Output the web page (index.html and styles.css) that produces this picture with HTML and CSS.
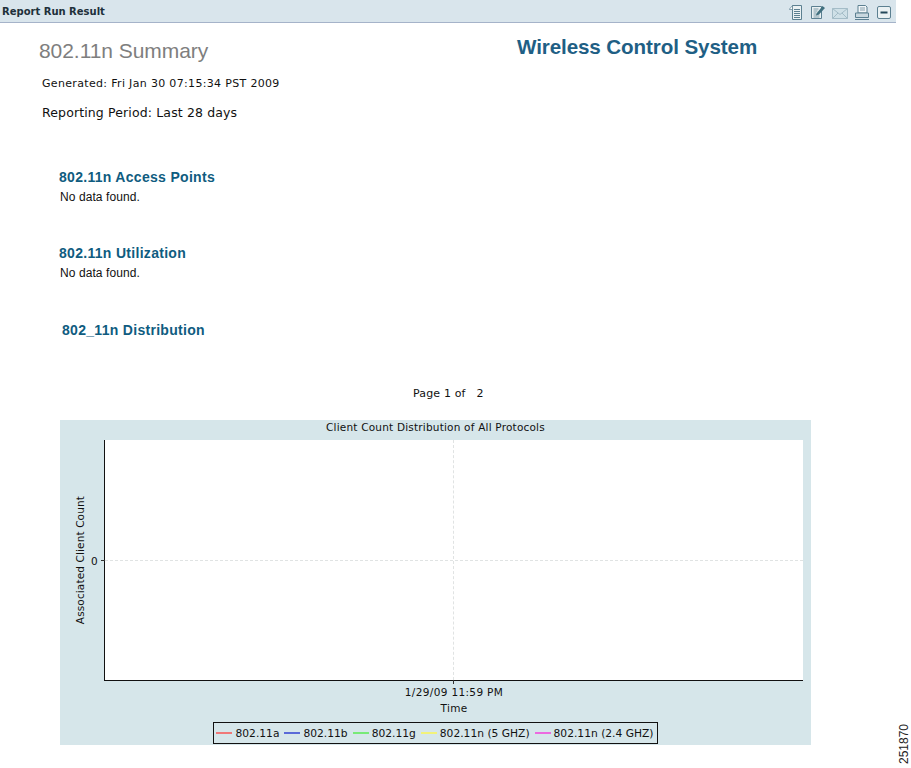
FILE: index.html
```html
<!DOCTYPE html>
<html lang="en">
<head>
<meta charset="utf-8">
<title>Report Run Result</title>
<link rel="stylesheet" href="styles.css">
</head>
<body>
<header class="topbar">
  <span class="topbar-title">Report Run Result</span>
  <div class="tools">
    <svg class="tool" viewBox="0 0 16 16"><path d="M4.500 1.500h9v14h-9z" fill="#eaf1f3" stroke="#5c8091"/><path d="M1.500 5 4.500 1.500V5.500H1.500z" fill="#fff" stroke="#5c8091" stroke-width=".7"/><path d="M6 5.500h6M6 7.500h6M6 9.500h6M6 11.500h6M6 13.500h6" stroke="#5c8091"/></svg>
    <svg class="tool" viewBox="0 0 16 16"><path d="M1.500 2.500h10v12h-10z" fill="#eaf1f3" stroke="#5c8091"/><path d="M3.500 5h5M3.500 7h4M3.500 9h3M3.500 11h6M3.500 13h6" stroke="#7d9aa7"/><path d="m6.500 9.500 6-7.500 2.500 2-6 6.500-3 1z" fill="#41707f"/></svg>
    <svg class="tool" viewBox="0 0 16 16"><path d="M.5 4.500h15v10H.5z" fill="#cfe0e7" stroke="#a4bcc7"/><path d="m.5 4.500 7.500 6 7.500-6M.5 14.500l5.500-5.500M15.500 14.500 10 9" fill="none" stroke="#a4bcc7"/></svg>
    <svg class="tool" viewBox="0 0 16 16"><path d="M4 1.500h7.500l1.500 1.500v6H4z" fill="#f2f6f8" stroke="#5c8091"/><path d="M1.500 9h13v4.500h-13z" fill="#c9d8df" stroke="#5c8091"/><path d="M1 15.500h14" stroke="#5c8091"/><path d="M6 4h5M6 6h5" stroke="#86a0ad"/></svg>
    <svg class="tool" viewBox="0 0 16 16"><rect x="1.500" y="2.500" width="13" height="12" rx="1.500" fill="#eaf1f3" stroke="#5c8091"/><path d="M4.500 8.500h7" stroke="#24485a" stroke-width="2"/></svg>
  </div>
</header>

<main class="report">
  <div class="masthead">
    <div>
      <h1 class="report-title">802.11n Summary</h1>
      <p class="generated">Generated: Fri Jan 30 07:15:34 PST 2009</p>
      <p class="period">Reporting Period: Last 28 days</p>
    </div>
    <div class="brand">Wireless Control System</div>
  </div>

  <section class="section section-first">
    <h2 class="section-title">802.11n Access Points</h2>
    <p class="empty">No data found.</p>
  </section>
  <section class="section section-second">
    <h2 class="section-title">802.11n Utilization</h2>
    <p class="empty">No data found.</p>
  </section>
  <section class="section section-third">
    <h2 class="section-title section-title-inset">802_11n Distribution</h2>
  </section>

  <p class="pager">Page 1 of &nbsp; 2</p>

  <figure class="chart">
    <figcaption class="chart-title">Client Count Distribution of All Protocols</figcaption>
    <div class="chart-body">
      <div class="y-label"><span>Associated Client Count</span></div>
      <div class="y-ticks"><span>0</span></div>
      <div class="plot">
        <i class="grid-h"></i>
        <i class="grid-v"></i>
        <i class="tick-y"></i>
        <i class="tick-x"></i>
      </div>
    </div>
    <div class="x-value">1/29/09 11:59 PM</div>
    <div class="x-label">Time</div>
    <div class="legend-wrap">
      <ul class="legend">
        <li><i class="swatch swatch-a"></i>802.11a</li>
        <li><i class="swatch swatch-b"></i>802.11b</li>
        <li><i class="swatch swatch-g"></i>802.11g</li>
        <li><i class="swatch swatch-n5"></i>802.11n (5 GHZ)</li>
        <li><i class="swatch swatch-n24"></i>802.11n (2.4 GHZ)</li>
      </ul>
    </div>
  </figure>
</main>
<div class="figure-id">251870</div>
</body>
</html>
```
FILE: styles.css
```css
* { box-sizing: border-box; }
html, body { margin: 0; padding: 0; }
body {
  width: 911px;
  height: 768px;
  overflow: hidden;
  position: relative;
  background: #fff;
  color: #111;
  font-family: "DejaVu Sans", sans-serif;
}
p, h1, h2, ul, figure { margin: 0; padding: 0; }

.topbar {
  width: 896px;
  height: 23px;
  background: #d9e5ec;
  border-bottom: 1px solid #a5b3c9;
  display: flex;
  align-items: center;
  justify-content: space-between;
  padding: 0 4px 0 2px;
}
.topbar-title {
  font: bold 10px/1 "DejaVu Sans", sans-serif;
  color: #20303a;
  position: relative;
  top: 1px;
}
.tools { display: flex; gap: 6px; padding-top: 1px; }
.tool { width: 16px; height: 16px; display: block; }

.report { padding-left: 39px; }
.masthead { display: flex; height: 117px; }
.masthead > div:first-child { width: 478px; }
.report-title {
  font: 400 21px/23px "Liberation Sans", sans-serif;
  color: #7e7e7e;
  letter-spacing: -.06px;
  margin-top: 16px;
}
.generated {
  font-size: 11px;
  line-height: 14px;
  letter-spacing: .33px;
  margin: 15px 0 0 3px;
}
.period {
  font-size: 12.500px;
  line-height: 16px;
  letter-spacing: .13px;
  margin: 14px 0 0 3px;
}
.brand {
  font: bold 20.600px/24px "Liberation Sans", sans-serif;
  color: #1f5f85;
  margin-top: 12px;
  letter-spacing: -.1px;
}

.section { margin-left: 20px; }
.section-first { margin-top: 27px; }
.section-second { margin-top: 38px; }
.section-third { margin-top: 39px; }
.section-title {
  font: bold 14px/20px "Liberation Sans", sans-serif;
  color: #0f5c80;
  letter-spacing: .3px;
}
.section-title-inset { margin-left: 3px; }
.empty {
  font: 12px/15px "Liberation Sans", sans-serif;
  letter-spacing: .08px;
  margin: 3px 0 0 1px;
  color: #111;
}

.pager {
  font-size: 11px;
  line-height: 14px;
  letter-spacing: .15px;
  margin: 47px 0 0 374px;
}

.chart {
  margin: 19px 0 0 21px;
  width: 751px;
  height: 325px;
  background: #d6e6ea;
  display: flex;
  flex-direction: column;
}
.chart-title {
  font-size: 10.500px;
  line-height: 14px;
  height: 20px;
  letter-spacing: .2px;
  text-align: center;
  color: #111;
}
.chart-body {
  display: flex;
  height: 241px;
  padding-right: 8px;
}
.y-label {
  width: 31px;
  display: flex;
  align-items: center;
  justify-content: flex-end;
  padding-right: 5px;
}
.y-label span {
  writing-mode: vertical-rl;
  transform: rotate(180deg);
  font-size: 10.500px;
  line-height: 12px;
  letter-spacing: .13px;
  white-space: nowrap;
}
.y-ticks {
  width: 13px;
  display: flex;
  align-items: center;
  font-size: 10.500px;
  line-height: 12px;
}
.plot {
  flex: 1;
  background: #fff;
  border-left: 1px solid #111;
  border-bottom: 1px solid #111;
  position: relative;
}
.grid-h {
  position: absolute;
  left: 0; right: 0; top: 120px;
  border-top: 1px dashed #e0e3e3;
}
.grid-v {
  position: absolute;
  top: 0; bottom: 0; left: 348px;
  border-left: 1px dashed #e0e3e3;
}
.tick-y {
  position: absolute;
  left: -4px; top: 120px;
  width: 4px;
  border-top: 1px solid #333;
}
.tick-x {
  position: absolute;
  left: 348px; bottom: -4px;
  height: 4px;
  border-left: 1px solid #333;
}
.x-value {
  font-size: 10.500px;
  line-height: 14px;
  letter-spacing: .35px;
  margin-top: 4px;
  padding-left: 37px;
  text-align: center;
}
.x-label {
  font-size: 10.500px;
  line-height: 14px;
  letter-spacing: .3px;
  margin-top: 2px;
  padding-left: 37px;
  text-align: center;
}
.legend-wrap {
  display: flex;
  justify-content: center;
  margin-top: 7px;
}
.legend {
  list-style: none;
  height: 22px;
  background: #d6e6ea;
  border: 1px solid #111;
  display: flex;
  align-items: center;
  gap: 5px;
  padding: 0 3px 0 2px;
  font-size: 10.700px;
  white-space: nowrap;
}
.legend li { display: flex; align-items: center; gap: 3px; }
.swatch { width: 16px; height: 2px; display: block; }
.swatch-a { background: #f07878; }
.swatch-b { background: #5a6ad8; }
.swatch-g { background: #78ea78; }
.swatch-n5 { background: #f2f27a; }
.swatch-n24 { background: #ec6ae0; }

.figure-id {
  position: absolute;
  right: 0;
  bottom: 4px;
  width: 13px;
  writing-mode: vertical-rl;
  transform: rotate(180deg);
  font: 12px/13px "Liberation Sans", sans-serif;
  color: #222;
}
```
